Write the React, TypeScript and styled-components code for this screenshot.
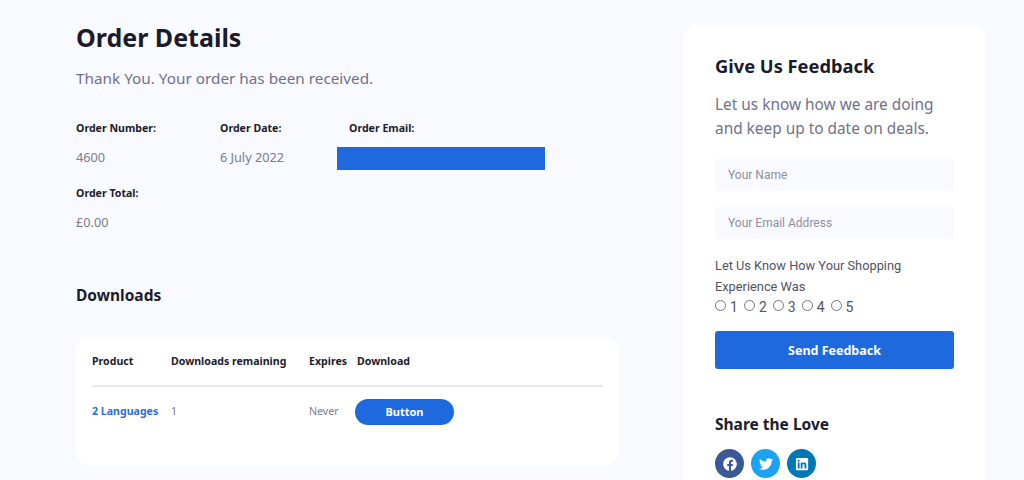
import React from 'react';
import styled, { createGlobalStyle } from 'styled-components';
import { FaFacebook, FaTwitter, FaLinkedin } from 'react-icons/fa';

const GlobalStyle = createGlobalStyle`
  html, body {
    margin: 0;
    height: 480px;
    overflow: hidden;
    background: #f9faff;
  }
`;

const uiFont = '"Noto Sans", "Open Sans", sans-serif';

const Page = styled.div`
  display: flex;
  align-items: flex-start;
  height: 480px;
  overflow: hidden;
  padding: 0 38px 0 76px;
  box-sizing: border-box;
  font-family: ${uiFont};
`;

const Main = styled.main`
  width: 543px;
  margin-right: 65px;
  flex-shrink: 0;
`;

const Title = styled.h1`
  margin: 19px 0 0;
  font-size: 25px;
  line-height: 36px;
  font-weight: 700;
  color: #1b1b2b;
`;

const Lead = styled.p`
  margin: 12px 0 0;
  font-size: 15.3px;
  line-height: 22px;
  color: #71718a;
`;

const Meta = styled.div`
  display: flex;
  margin-top: 30px;
`;

const MetaItem = styled.div<{ $width?: number }>`
  display: flex;
  flex-direction: column;
  width: ${(p) => (p.$width ? `${p.$width}px` : 'auto')};
`;

const MetaLabel = styled.div<{ $indent?: number }>`
  height: 18px;
  line-height: 18px;
  font-size: 10.6px;
  font-weight: 700;
  color: #1b1b2b;
  padding-left: ${(p) => p.$indent ?? 0}px;
`;

const MetaValue = styled.div`
  margin-top: 11px;
  height: 18px;
  line-height: 18px;
  font-size: 12.7px;
  color: #7a7a8e;
`;

const Redaction = styled.div`
  margin-top: 10px;
  width: 208px;
  height: 23px;
  background: #1f69df;
`;

const TotalBlock = styled.div`
  margin-top: 14px;
`;

const SectionTitle = styled.h2`
  margin: 53px 0 0;
  font-size: 15.5px;
  line-height: 22px;
  font-weight: 700;
  color: #1b1b2b;
`;

const TableCard = styled.div`
  margin-top: 31px;
  height: 128px;
  background: #fff;
  border-radius: 14px;
  padding: 0 16px;
  box-sizing: border-box;
`;

const Table = styled.table`
  width: 100%;
  table-layout: fixed;
  border-collapse: collapse;
`;

const Th = styled.th<{ $width?: number }>`
  width: ${(p) => (p.$width ? `${p.$width}px` : 'auto')};
  height: 48px;
  padding: 0;
  text-align: left;
  font-size: 10.6px;
  font-weight: 700;
  color: #1b1b2b;
  border-bottom: 2px solid #e9e9ec;
  white-space: nowrap;
`;

const Td = styled.td`
  height: 47px;
  padding: 0;
  font-size: 10.6px;
  color: #7a7a8e;
  vertical-align: middle;
`;

const ProductLink = styled.a`
  font-weight: 700;
  color: #2f6bd8;
  text-decoration: none;
  white-space: nowrap;
`;

const PillButton = styled.button`
  display: block;
  margin: 2px 0 0 -2px;
  width: 99px;
  height: 26px;
  border: none;
  border-radius: 13px;
  background: #1f69df;
  color: #fff;
  font-family: ${uiFont};
  font-size: 11px;
  font-weight: 700;
`;

const Sidebar = styled.aside`
  width: 303px;
  height: 500px;
  flex-shrink: 0;
  margin-top: 25px;
  margin-left: -1px;
  padding: 28px 32px 0 32px;
  box-sizing: border-box;
  background: #fff;
  border-radius: 14px;
`;

const SideTitle = styled.h2`
  margin: 0;
  font-size: 18.3px;
  line-height: 26px;
  font-weight: 700;
  color: #1b1b2b;
`;

const SideText = styled.p`
  margin: 14px 0 18px;
  font-size: 15.4px;
  line-height: 24px;
  color: #71718a;
`;

const Input = styled.input`
  display: block;
  width: 100%;
  height: 32px;
  box-sizing: border-box;
  margin-top: 16px;
  padding: 0 13px;
  border: none;
  background: #f9faff;
  font-family: Roboto, sans-serif;
  font-size: 12px;
  &::placeholder {
    color: #8e8e9e;
    opacity: 1;
  }
`;

const Question = styled.div`
  margin-top: 16px;
  font-family: Roboto, sans-serif;
  font-size: 12.8px;
  line-height: 21px;
  color: #53535f;
`;

const Ratings = styled.div`
  display: flex;
  gap: 6px;
  height: 20px;
  align-items: center;
`;

const Rating = styled.label`
  display: flex;
  align-items: center;
  gap: 4px;
  font-family: Roboto, sans-serif;
  font-size: 14px;
  color: #53535f;
`;

const Radio = styled.input`
  width: 11px;
  height: 11px;
  margin: 0 0 3px;
`;

const SendButton = styled.button`
  display: block;
  width: 100%;
  height: 38px;
  margin-top: 14px;
  border: none;
  border-radius: 3px;
  background: #1f69df;
  color: #fff;
  font-family: ${uiFont};
  font-size: 12.5px;
  font-weight: 700;
`;

const ShareTitle = styled.h3`
  margin: 43px 0 0;
  font-size: 15.5px;
  line-height: 24px;
  font-weight: 700;
  color: #1b1b2b;
`;

const Socials = styled.div`
  display: flex;
  gap: 7px;
  margin-top: 13px;
`;

const Social = styled.a<{ $color: string }>`
  display: flex;
  align-items: center;
  justify-content: center;
  width: 29px;
  height: 29px;
  border-radius: 50%;
  background: ${(p) => p.$color};
  color: #fff;
  font-size: 14px;
`;

export default function App() {
  return (
    <>
      <GlobalStyle />
      <Page>
        <Main>
          <Title>Order Details</Title>
          <Lead>Thank You. Your order has been received.</Lead>
          <Meta>
            <MetaItem $width={144}>
              <MetaLabel>Order Number:</MetaLabel>
              <MetaValue>4600</MetaValue>
            </MetaItem>
            <MetaItem $width={117}>
              <MetaLabel>Order Date:</MetaLabel>
              <MetaValue>6 July 2022</MetaValue>
            </MetaItem>
            <MetaItem>
              <MetaLabel $indent={12}>Order Email:</MetaLabel>
              <Redaction />
            </MetaItem>
          </Meta>
          <TotalBlock>
            <MetaLabel>Order Total:</MetaLabel>
            <MetaValue>£0.00</MetaValue>
          </TotalBlock>
          <SectionTitle>Downloads</SectionTitle>
          <TableCard>
            <Table>
              <thead>
                <tr>
                  <Th $width={79}>Product</Th>
                  <Th $width={138}>Downloads remaining</Th>
                  <Th $width={48}>Expires</Th>
                  <Th>Download</Th>
                </tr>
              </thead>
              <tbody>
                <tr>
                  <Td>
                    <ProductLink href="#">2 Languages</ProductLink>
                  </Td>
                  <Td>1</Td>
                  <Td>Never</Td>
                  <Td>
                    <PillButton>Button</PillButton>
                  </Td>
                </tr>
              </tbody>
            </Table>
          </TableCard>
        </Main>
        <Sidebar>
          <SideTitle>Give Us Feedback</SideTitle>
          <SideText>
            Let us know how we are doing
            <br />
            and keep up to date on deals.
          </SideText>
          <Input placeholder="Your Name" />
          <Input placeholder="Your Email Address" />
          <Question>
            Let Us Know How Your Shopping
            <br />
            Experience Was
          </Question>
          <Ratings>
            {[1, 2, 3, 4, 5].map((n) => (
              <Rating key={n}>
                <Radio type="radio" name="rating" />
                {n}
              </Rating>
            ))}
          </Ratings>
          <SendButton>Send Feedback</SendButton>
          <ShareTitle>Share the Love</ShareTitle>
          <Socials>
            <Social $color="#3b5998" href="#" aria-label="Facebook">
              <FaFacebook />
            </Social>
            <Social $color="#1da1f2" href="#" aria-label="Twitter">
              <FaTwitter />
            </Social>
            <Social $color="#0077b5" href="#" aria-label="LinkedIn">
              <FaLinkedin />
            </Social>
          </Socials>
        </Sidebar>
      </Page>
    </>
  );
}
